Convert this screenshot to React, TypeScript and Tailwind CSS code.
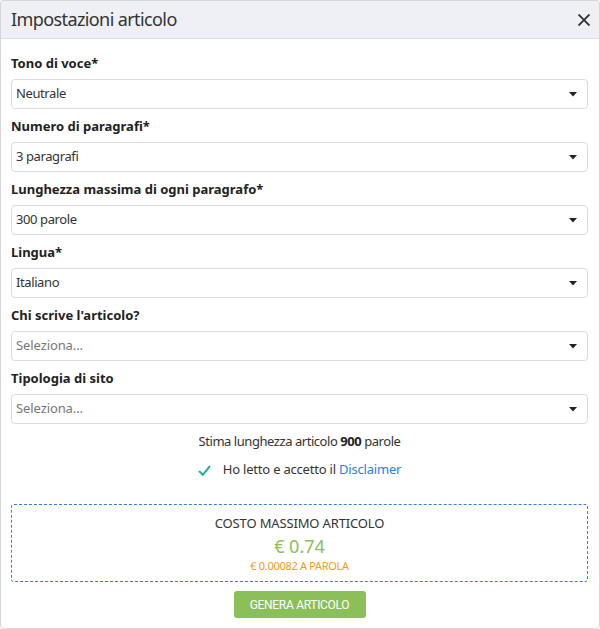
import React from "react";

const fields: { label: string; value: string; placeholder?: boolean }[] = [
  { label: "Tono di voce*", value: "Neutrale" },
  { label: "Numero di paragrafi*", value: "3 paragrafi" },
  { label: "Lunghezza massima di ogni paragrafo*", value: "300 parole" },
  { label: "Lingua*", value: "Italiano" },
  { label: "Chi scrive l'articolo?", value: "Seleziona...", placeholder: true },
  { label: "Tipologia di sito", value: "Seleziona...", placeholder: true },
];

function Caret() {
  return (
    <svg width="8" height="5" viewBox="0 0 8 5" className="shrink-0">
      <path d="M0 0h8L4 4.5z" fill="#222" />
    </svg>
  );
}

function SelectField({ label, value, placeholder }: { label: string; value: string; placeholder?: boolean }) {
  return (
    <div className="flex flex-col">
      <div className="h-[33px] flex items-center pt-[2px] text-[13px] font-bold text-[#222]">{label}</div>
      <div className="h-[30px] flex items-center justify-between rounded-[4px] border border-[#dcdcdc] bg-white pl-[4px] pr-[10px]">
        <span
          className={
            placeholder
              ? "text-[13px] text-[#777] tracking-[-0.1px]"
              : "text-[13px] text-[#333] tracking-[-0.4px]"
          }
        >
          {value}
        </span>
        <Caret />
      </div>
    </div>
  );
}

export default function App() {
  return (
    <div
      className="w-[600px] h-[629px] bg-white border border-[#d6d6d6] rounded-[3px] flex flex-col overflow-hidden"
      style={{ fontFamily: '"Noto Sans", "Open Sans", sans-serif' }}
    >
      <div className="h-[38px] shrink-0 bg-[#eff0f5] border-b border-[#dcdcdc] flex items-center justify-between pl-[10px] pr-[8px]">
        <span className="text-[18px] text-[#333] tracking-[-0.6px]">Impostazioni articolo</span>
        <svg width="12" height="12" viewBox="0 0 12 12" className="mr-[1px]">
          <path d="M0.5 0.5L11.5 11.5M11.5 0.5L0.5 11.5" stroke="#333" strokeWidth="1.9" />
        </svg>
      </div>
      <div className="flex flex-col px-[10px] pr-[11px] pt-[7px]">
        {fields.map((f) => (
          <SelectField key={f.label} label={f.label} value={f.value} placeholder={f.placeholder} />
        ))}
        <div className="h-[31px] mt-[2px] flex items-center justify-center text-[13px] text-[#333] tracking-[-0.45px]">
          <span>
            Stima lunghezza articolo <b className="font-bold text-[#222]">900</b> parole
          </span>
        </div>
        <div className="h-[26px] flex items-center justify-center text-[13px] text-[#333] gap-[12px] tracking-[-0.2px]">
          <svg width="13" height="11" viewBox="0 0 13 11">
            <path d="M1 6l3.8 3.8L12 1" stroke="#1bb39c" strokeWidth="2" fill="none" />
          </svg>
          <span>
            Ho letto e accetto il <span className="text-[#2b7ee0]">Disclaimer</span>
          </span>
        </div>
        <div className="mt-[21px] h-[78px] border border-dashed border-[#2f7fe5] rounded-[3px] flex flex-col items-center justify-center">
          <div className="text-[13px] text-[#333] leading-[18px] pt-[2px] tracking-[-0.15px]">COSTO MASSIMO ARTICOLO</div>
          <div className="text-[18px] text-[#8bc05a] leading-[24px] mt-[2px]">€ 0.74</div>
          <div className="text-[11px] text-[#f39c12] leading-[16px] tracking-[-0.3px]">€ 0.00082 A PAROLA</div>
        </div>
        <div className="flex justify-center mt-[9px]">
          <button
            className="w-[132px] h-[27px] rounded-[3px] bg-[#8bbf57] text-white text-[12px] tracking-[-0.3px]"
            style={{ fontFamily: "Roboto, sans-serif" }}
          >
            GENERA ARTICOLO
          </button>
        </div>
      </div>
    </div>
  );
}
